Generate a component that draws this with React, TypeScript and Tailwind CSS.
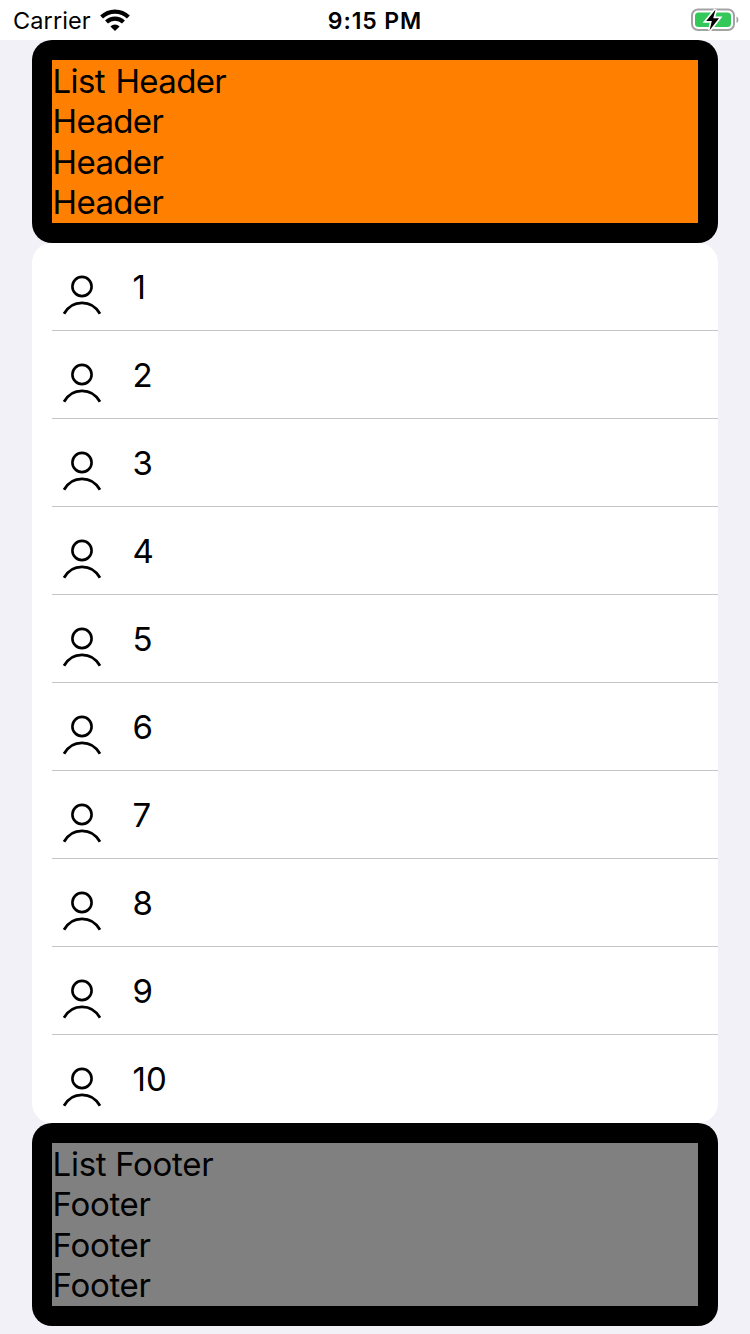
import React from 'react';

const HEADER_LINES = ['List Header', 'Header', 'Header', 'Header'];
const FOOTER_LINES = ['List Footer', 'Footer', 'Footer', 'Footer'];
const ROWS = [1, 2, 3, 4, 5, 6, 7, 8, 9, 10];

function WifiIcon() {
  return (
    <svg width="30" height="22" viewBox="0 0 30 22" fill="none" stroke="#000" strokeWidth="4.2">
      <path d="M1.6 8A19.3 19.3 0 0 1 28.4 8" />
      <path d="M6.5 13A12.4 12.4 0 0 1 23.5 13" />
      <path d="M15 22L10.4 17.4A6.6 6.6 0 0 1 19.6 17.4Z" fill="#000" stroke="none" />
    </svg>
  );
}

function BatteryIcon() {
  return (
    <svg width="50" height="26" viewBox="0 0 50 26" fill="none">
      <rect x="2" y="2.5" width="42" height="20.5" rx="6" stroke="#a3a3a3" strokeWidth="2" />
      <rect x="5" y="5.5" width="36" height="14.5" rx="3.5" fill="#34c759" />
      <path d="M46.5 9.5C49 10.5 49 15 46.5 16Z" fill="#a3a3a3" />
      <path
        d="M25.6 2.5L16.2 14H21.8L19.6 23.2L29 11.2H23.2Z"
        fill="#000"
        stroke="#fff"
        strokeWidth="3.4"
        paintOrder="stroke"
      />
    </svg>
  );
}

function PersonIcon() {
  return (
    <svg width="40" height="42" viewBox="0 0 40 42" fill="none" stroke="#000" strokeWidth="2.6">
      <circle cx="20" cy="13.5" r="9.6" />
      <path d="M2 40.8C10.2 26.2 29.8 26.2 38 40.8" strokeWidth="2.8" />
    </svg>
  );
}

interface TextBlockProps {
  lines: string[];
  className: string;
}

function TextBlock({ lines, className }: TextBlockProps) {
  return (
    <div className="h-[203px] shrink-0 rounded-[20px] bg-black p-5">
      <div className={`h-[163px] pt-px text-[33px] leading-[40.4px] ${className}`}>
        {lines.map((line, i) => (
          <p key={i}>{line}</p>
        ))}
      </div>
    </div>
  );
}

export default function App() {
  return (
    <div className="flex h-[1334px] w-[750px] flex-col overflow-hidden bg-[#f2f1f7] font-['Inter',sans-serif] text-black">
      {/* Status bar */}
      <header className="grid h-10 shrink-0 grid-cols-3 items-center bg-white">
        <div className="flex items-center gap-[9px] pl-[13px]">
          <span className="pt-px text-[23.5px] leading-10 tracking-[0.1px]">Carrier</span>
          <div className="pb-0.5">
            <WifiIcon />
          </div>
        </div>
        <span className="pt-px text-center text-[23px] leading-10 font-semibold tracking-[0.9px]">9:15 PM</span>
        <div className="flex justify-end pr-[10px] pb-px">
          <BatteryIcon />
        </div>
      </header>

      <main className="flex flex-col px-8">
        <TextBlock lines={HEADER_LINES} className="bg-[#ff8000] pl-[0.6px] tracking-[-0.65px] [word-spacing:2px]" />

        <ul className="rounded-[20px] bg-white pl-5">
          {ROWS.map((row) => (
            <li key={row} className="flex h-[88px] border-b border-[#c6c6c8] pl-[10px] last:border-b-0">
              <div className="pt-[30px]">
                <PersonIcon />
              </div>
              <span className="pt-6 pl-[30.5px] text-[33px] leading-10">{row}</span>
            </li>
          ))}
        </ul>

        <TextBlock lines={FOOTER_LINES} className="bg-[#808080] pl-[0.6px] tracking-[-0.3px]" />
      </main>
    </div>
  );
}
